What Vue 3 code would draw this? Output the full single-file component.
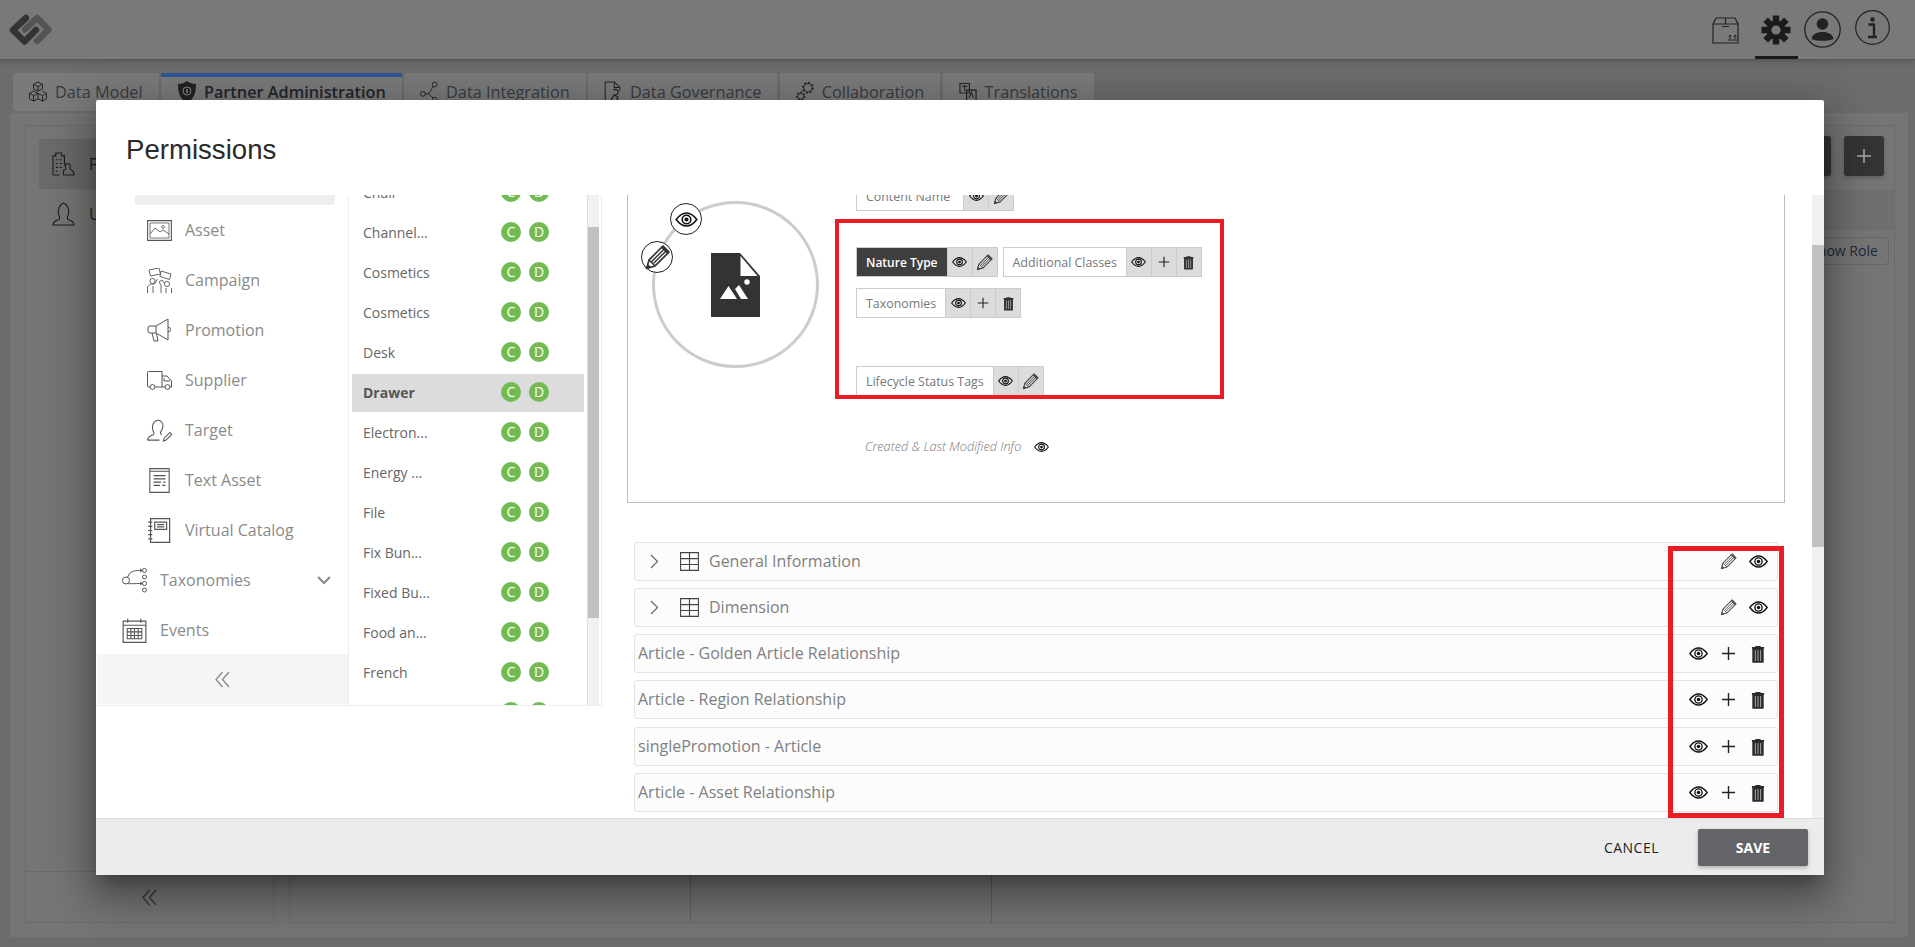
<script setup>
const tabs = [
  { label: 'Data Model', icon: 'i-cubes' },
  { label: 'Partner Administration', icon: 'i-shield', active: true },
  { label: 'Data Integration', icon: 'i-nodes' },
  { label: 'Data Governance', icon: 'i-govern' },
  { label: 'Collaboration', icon: 'i-collab' },
  { label: 'Translations', icon: 'i-translate' }
]
const navItems = [
  { label: 'Asset', icon: 'i-asset', sub: true },
  { label: 'Campaign', icon: 'i-campaign', sub: true },
  { label: 'Promotion', icon: 'i-promo', sub: true },
  { label: 'Supplier', icon: 'i-truck', sub: true },
  { label: 'Target', icon: 'i-target', sub: true },
  { label: 'Text Asset', icon: 'i-text', sub: true },
  { label: 'Virtual Catalog', icon: 'i-catalog', sub: true },
  { label: 'Taxonomies', icon: 'i-tax', chevron: true },
  { label: 'Events', icon: 'i-cal' }
]
const listItems = ['Chair', 'Channel...', 'Cosmetics', 'Cosmetics', 'Desk', 'Drawer', 'Electron...', 'Energy ...', 'File', 'Fix Bun...', 'Fixed Bu...', 'Food an...', 'French', 'Furniture']
const accordions = [
  { label: 'General Information', group: true },
  { label: 'Dimension', group: true },
  { label: 'Article - Golden Article Relationship' },
  { label: 'Article - Region Relationship' },
  { label: 'singlePromotion - Article', late: true },
  { label: 'Article - Asset Relationship' }
]
</script>

<template>
  <div class="page">
    <svg class="defs" aria-hidden="true">
      <symbol id="i-eye" viewBox="0 0 24 16">
        <path d="M1 8C5 2.700 8.500 1 12 1s7 1.700 11 7c-4 5.300-7.500 7-11 7S5 13.300 1 8Z" fill="none" stroke="currentColor" stroke-width="1.700" />
        <circle cx="12" cy="8" r="4.600" fill="none" stroke="currentColor" stroke-width="1.700" />
        <circle cx="12" cy="8" r="2.200" fill="currentColor" />
      </symbol>
      <symbol id="i-pencil" viewBox="0 0 24 24">
        <path d="M3 21l2-7L16.500 2.500l5 5L10 19Z" fill="none" stroke="currentColor" stroke-width="1.400" stroke-linejoin="round" />
        <path d="M7.200 15.300 18 4.500M8.800 16.800 19.700 6M5 14l5 5" fill="none" stroke="currentColor" stroke-width="1.200" />
        <path d="M2.500 21.500 3.700 17l3.300 3.300Z" fill="currentColor" />
        <path d="M15 4l5 5 1.800-1.800-5-5Z" fill="currentColor" />
      </symbol>
      <symbol id="i-plus" viewBox="0 0 16 16">
        <path d="M8 1v14M1 8h14" fill="none" stroke="currentColor" stroke-width="1.500" />
      </symbol>
      <symbol id="i-trash" viewBox="0 0 16 20">
        <path d="M5 2V.8h6V2h4v2H1V2Z" fill="currentColor" />
        <path d="M1.500 3h13v16a1 1 0 0 1-1 1h-11a1 1 0 0 1-1-1Z" fill="currentColor" />
        <path d="M5 5.500V18M8 5.500V18M11 5.500V18" fill="none" stroke="#b9b9b9" stroke-width="1" />
      </symbol>
      <symbol id="i-grid" viewBox="0 0 19 19">
        <path d="M.6.6h17.800v17.800H.6ZM.6 6.600h17.800M.6 12.500h17.800M9.500.6v17.800" fill="none" stroke="currentColor" stroke-width="1.100" />
      </symbol>
      <symbol id="i-asset" viewBox="0 0 25 21">
        <path d="M.6.6h23.800v19.800H.6Z" fill="none" stroke="currentColor" stroke-width="1.100" />
        <path d="M3 3h19v15H3Z" fill="none" stroke="currentColor" stroke-width=".8" />
        <path d="M3 14l5-6 5 4 3-2 6 4" fill="none" stroke="currentColor" stroke-width=".9" />
        <circle cx="16" cy="7" r="1.400" fill="none" stroke="currentColor" stroke-width=".8" />
      </symbol>
      <symbol id="i-campaign" viewBox="0 0 25 25">
        <path d="M2 2l10-2 1.500 6-10 2ZM14 3l10 3-1.500 5.500-9.500-3Z" fill="none" stroke="currentColor" stroke-width=".9" />
        <circle cx="5.500" cy="13" r="2.600" fill="none" stroke="currentColor" stroke-width=".9" />
        <circle cx="20" cy="16" r="2.600" fill="none" stroke="currentColor" stroke-width=".9" />
        <path d="M.5 25v-6l3-3h4l3-5M6 25v-7M14 25v-8l-2-3 3-2 2 3M24.500 25v-5M19 25v-5" fill="none" stroke="currentColor" stroke-width=".9" />
      </symbol>
      <symbol id="i-promo" viewBox="0 0 25 25">
        <path d="M21 1 9 8H3a2 2 0 0 0-2 2v3a2 2 0 0 0 2 2h6l12 7ZM21 9a2.500 2.500 0 0 1 0 5M9 8v7M5 15l2 8h4l-1.500-7.500" fill="none" stroke="currentColor" stroke-width="1" stroke-linejoin="round" />
      </symbol>
      <symbol id="i-truck" viewBox="0 0 25 19">
        <path d="M3 16H1.500a1 1 0 0 1-1-1V1.500a1 1 0 0 1 1-1H15v15.500H8M15 5h5l4.500 5v6h-2M15 16h3M17 7v3h6" fill="none" stroke="currentColor" stroke-width="1" />
        <circle cx="5.500" cy="16" r="2.400" fill="none" stroke="currentColor" stroke-width="1" />
        <circle cx="20.500" cy="16" r="2.400" fill="none" stroke="currentColor" stroke-width="1" />
      </symbol>
      <symbol id="i-target" viewBox="0 0 26 23">
        <path d="M.5 21.500c0-3 2-4 6-5.500 1-1 1-2 .2-3.500C5 10 5 3 10 1c5-1 7 3 6.500 7-.3 2.500-2 4-2.500 5.500 0 1 .3 2 1.500 2.500M.5 21.500H13" fill="none" stroke="currentColor" stroke-width="1.100" />
        <path d="M17 22.500l.8-3 6-6 2 2-6 6Z" fill="none" stroke="currentColor" stroke-width="1.100" />
      </symbol>
      <symbol id="i-text" viewBox="0 0 19 23">
        <path d="M.6.6h17.800v21.800H.6ZM.6 3h17.800" fill="none" stroke="currentColor" stroke-width="1" />
        <path d="M4 7h11M4 10h11M4 13h7M13 13h2M4 16h6M12 16h3" fill="none" stroke="currentColor" stroke-width="1" />
      </symbol>
      <symbol id="i-catalog" viewBox="0 0 19 21">
        <path d="M2 .6h16v19.800H2Z" fill="none" stroke="currentColor" stroke-width="1" />
        <path d="M5.500 3.500h10v6h-10ZM7.500 5.500h6M7.500 7.500h6M0 3.500h3.500M0 7h3.500M0 10.500h3.500M0 14h3.500M0 17.500h3.500" fill="none" stroke="currentColor" stroke-width="1" />
      </symbol>
      <symbol id="i-tax" viewBox="0 0 25 25">
        <circle cx="4" cy="12.500" r="3.500" fill="none" stroke="currentColor" stroke-width="1" />
        <circle cx="22.500" cy="2.500" r="2" fill="none" stroke="currentColor" stroke-width="1" />
        <circle cx="22.500" cy="9" r="2" fill="none" stroke="currentColor" stroke-width="1" />
        <circle cx="22.500" cy="15.500" r="2" fill="none" stroke="currentColor" stroke-width="1" />
        <circle cx="22.500" cy="22" r="2" fill="none" stroke="currentColor" stroke-width="1" />
        <path d="M5.500 9.500C8 2 14 2.500 20 2.500M5.500 15.500C8 16 12 15.500 20 15.500M18 .8l2.200 1.700L18 4.200M18 13.800l2.200 1.700-2.200 1.700" fill="none" stroke="currentColor" stroke-width="1" />
      </symbol>
      <symbol id="i-cal" viewBox="0 0 23 24">
        <path d="M.6 3h21.800v20.400H.6ZM.6 7h21.800M5 .6v4M17.500.6v4" fill="none" stroke="currentColor" stroke-width="1.100" />
        <path d="M4.500 10h14v10h-14ZM4.500 13.300h14M4.500 16.700h14M8 10v10M11.500 10v10M15 10v10" fill="none" stroke="currentColor" stroke-width="1" />
      </symbol>
      <symbol id="i-cubes" viewBox="0 0 20 24">
        <path d="M10 1l5 2.500v5L10 11 5 8.500v-5ZM5 3.500l5 2.500 5-2.500M10 6v5M5 11l5 2.500v6L5 22l-4.500-2.500v-6ZM.5 13.500 5 16l5-2.500M5 16v6M15 11l4.500 2.500v6L15 22l-5-2.500M10 13.500l5 2.500 4.500-2.500M15 16v6" fill="none" stroke="currentColor" stroke-width="1.100" />
      </symbol>
      <symbol id="i-shield" viewBox="0 0 18 22">
        <path d="M9 0c2.500 2 5.500 3 9 3 0 9-2 15-9 19C2 18 0 12 0 3c3.500 0 6.500-1 9-3Z" fill="currentColor" />
        <circle cx="9" cy="10" r="4" fill="none" stroke="#8a8a8a" stroke-width="1" />
        <path d="M9 8v4" stroke="#8a8a8a" stroke-width="1.500" />
      </symbol>
      <symbol id="i-nodes" viewBox="0 0 19 22">
        <circle cx="3" cy="13" r="2.500" fill="none" stroke="currentColor" stroke-width="1" />
        <circle cx="15.500" cy="3" r="2.500" fill="none" stroke="currentColor" stroke-width="1" />
        <circle cx="15.500" cy="19" r="2.500" fill="none" stroke="currentColor" stroke-width="1" />
        <path d="M5.500 13H9l5-8M9 13l5 4.500" fill="none" stroke="currentColor" stroke-width="1" />
      </symbol>
      <symbol id="i-govern" viewBox="0 0 19 24">
        <path d="M11 23H1V1h10l6 6v4M11 1v6h6" fill="none" stroke="currentColor" stroke-width="1.100" />
        <path d="M6 23l5-8 4 3-3 5ZM10 10a3 3 0 1 1 3 5" fill="none" stroke="currentColor" stroke-width="1.400" />
      </symbol>
      <symbol id="i-collab" viewBox="0 0 19 21">
        <circle cx="12.500" cy="6" r="4.400" fill="none" stroke="currentColor" stroke-width="1" />
        <circle cx="12.500" cy="6" r="5.400" fill="none" stroke="currentColor" stroke-width="1.800" stroke-dasharray="1.800 2.400" />
        <circle cx="5" cy="15" r="3.200" fill="none" stroke="currentColor" stroke-width="1" />
        <circle cx="5" cy="15" r="4.200" fill="none" stroke="currentColor" stroke-width="1.600" stroke-dasharray="1.600 2.200" />
      </symbol>
      <symbol id="i-translate" viewBox="0 0 19 20">
        <path d="M1 1h10v10H1ZM8 8h10v11H8Z" fill="none" stroke="currentColor" stroke-width="1.200" />
        <path d="M3 4h6M6 3v6M10.500 16.500l2.500-6 2.500 6" fill="none" stroke="currentColor" stroke-width="1.100" />
      </symbol>
      <symbol id="i-building" viewBox="0 0 24 25">
        <path d="M1 24V4h3V1h6v3h3v10M1 24h7M4 8h2M8 8h2M4 12h2M8 12h2M4 16h2M8 16h2M4 20h2" fill="none" stroke="currentColor" stroke-width="1.100" />
        <path d="M12 24v-4c0-1 1-1.500 2-2 .5-1 .3-2 0-3 0-4 5-4 5 0 0 1-.5 2 0 3 2 1 4 2 4 6Z" fill="none" stroke="currentColor" stroke-width="1.100" />
      </symbol>
      <symbol id="i-person" viewBox="0 0 23 24">
        <path d="M1 23c0-3 2-4 6-5.500 1-1 1-2 .2-3.500C5.500 11 5.500 4 11.500 1c6 3 6 10 4.300 13-.8 1.500-.8 2.500.2 3.500 4 1.500 6 2.500 6 5.500Z" fill="none" stroke="currentColor" stroke-width="1.100" />
      </symbol>
    </svg>

    <header class="topbar">
      <svg class="logo" viewBox="0 0 45 31">
        <path d="M29 27 40.500 15.500 29 4 17 15.500" fill="none" stroke="#545454" stroke-width="6.500" stroke-linejoin="round" stroke-linecap="round" />
        <path d="M18 4 5 16l11.500 11.500L28 16" fill="none" stroke="#333" stroke-width="6.500" stroke-linejoin="round" stroke-linecap="round" />
      </svg>
      <div class="top-icons">
        <svg class="t-box" viewBox="0 0 27 27">
          <path d="M1 7 4 1h19l3 6v19H1ZM1 7h25M13.500 1v6M10 9.500h7" fill="none" stroke="#222" stroke-width="1.200" />
          <path d="M16 23h9M18 22v-4M23 22v-4M16.800 19.500 18 18l1.200 1.500M21.800 19.500 23 18l1.200 1.500" fill="none" stroke="#222" stroke-width="1" />
        </svg>
        <div class="gear-cell">
          <svg class="t-gear" viewBox="0 0 32 32">
            <path d="M16 1.500v29M1.500 16h29M5.700 5.700l20.600 20.600M26.300 5.700 5.700 26.300" stroke="#1b1b1b" stroke-width="6.500" />
            <circle cx="16" cy="16" r="9.500" fill="#1b1b1b" />
            <circle cx="16" cy="16" r="4.600" fill="#787878" />
          </svg>
        </div>
        <svg class="t-user" viewBox="0 0 37 37">
          <circle cx="18.500" cy="18.500" r="17.700" fill="none" stroke="#222" stroke-width="1.300" />
          <circle cx="18.500" cy="13" r="5.800" fill="#222" />
          <path d="M7.500 28c1-5 5-7 11-7s10 2 11 7c-2 1-6 1.800-11 1.800S9.500 29 7.500 28Z" fill="#222" />
        </svg>
        <svg class="t-info" viewBox="0 0 35 35">
          <circle cx="17.500" cy="17.500" r="16.800" fill="none" stroke="#222" stroke-width="1.200" />
          <circle cx="17.500" cy="9.500" r="2.300" fill="#222" />
          <path d="M13.500 14.500h5.500v12M13 27h9" fill="none" stroke="#222" stroke-width="2.400" />
        </svg>
      </div>
    </header>

    <nav class="tabs">
      <div v-for="t in tabs" :key="t.label" class="tab" :class="{ active: t.active }">
        <svg class="tab-icon"><use :href="'#' + t.icon" /></svg>
        <span>{{ t.label }}</span>
      </div>
    </nav>

    <main class="panel">
      <aside class="bg-side">
        <div class="bg-side-item current">
          <svg class="bg-side-icon"><use href="#i-building" /></svg><span>Partners</span>
        </div>
        <div class="bg-side-item">
          <svg class="bg-side-icon"><use href="#i-person" /></svg><span>Users</span>
        </div>
        <div class="bg-collapse">
          <svg viewBox="0 0 15 17" class="dbl"><path d="M7.500 1 1 8.500 7.500 16M14 1 7.500 8.500 14 16" fill="none" stroke="#333" stroke-width="1.200" /></svg>
        </div>
      </aside>
      <section class="bg-main">
        <div class="bg-toolbar">
          <div class="bg-btn"></div>
          <div class="bg-btn"><svg class="bg-plus"><use href="#i-plus" /></svg></div>
        </div>
        <div class="bg-strip"></div>
        <div class="bg-action"><span class="bg-show">Show Role</span></div>
        <div class="bg-cols">
          <div class="bg-col c1"></div>
          <div class="bg-col c2"></div>
          <div class="bg-col c3"></div>
        </div>
      </section>
    </main>

    <div class="modal">
      <div class="modal-title"><h1>Permissions</h1></div>
      <div class="modal-body">
        <div class="left">
          <div class="nav">
            <div class="nav-selected"></div>
            <div v-for="n in navItems" :key="n.label" class="nav-item" :class="{ sub: n.sub }">
              <svg class="nav-icon"><use :href="'#' + n.icon" /></svg>
              <span>{{ n.label }}</span>
              <svg v-if="n.chevron" class="nav-chev" viewBox="0 0 14 9">
                <path d="M1 1l6 6 6-6" fill="none" stroke="#8a8a8a" stroke-width="2.200" />
              </svg>
            </div>
            <div class="nav-collapse">
              <svg viewBox="0 0 15 17" class="dbl"><path d="M7.500 1 1 8.500 7.500 16M14 1 7.500 8.500 14 16" fill="none" stroke="#888" stroke-width="1.300" /></svg>
            </div>
          </div>
          <div class="list">
            <div v-for="(item, i) in listItems" :key="i" class="list-row" :class="{ selected: item === 'Drawer' }">
              <span class="list-name">{{ item }}</span>
              <span class="badge">C</span>
              <span class="badge">D</span>
            </div>
          </div>
          <div class="track list-track"><div class="thumb"></div></div>
        </div>

        <div class="content">
          <div class="frame">
            <div class="circle">
              <span class="bubble b-eye"><svg class="ic-eye"><use href="#i-eye" /></svg></span>
              <span class="bubble b-pencil"><svg class="ic-pencil big"><use href="#i-pencil" /></svg></span>
              <svg class="doc" viewBox="0 0 49 64">
                <path d="M0 0h29l20 23v41H0Z" fill="#333" />
                <path d="M29.500 3v20h17Z" fill="#fff" />
                <path d="M9 46l8.500-13L26 46ZM24 36l4-4 9 14h-7Z" fill="#fff" />
                <circle cx="36" cy="29" r="2.700" fill="#fff" />
              </svg>
            </div>
            <div class="fields">
              <div class="chip chip-wide mb36">
                <span class="chip-label">Content Name</span>
                <span class="cell"><svg class="ic-eye"><use href="#i-eye" /></svg></span>
                <span class="cell"><svg class="ic-pencil"><use href="#i-pencil" /></svg></span>
              </div>
              <div class="chip-row mb11">
                <div class="chip">
                  <span class="chip-label dark">Nature Type</span>
                  <span class="cell"><svg class="ic-eye"><use href="#i-eye" /></svg></span>
                  <span class="cell"><svg class="ic-pencil"><use href="#i-pencil" /></svg></span>
                </div>
                <div class="chip">
                  <span class="chip-label">Additional Classes</span>
                  <span class="cell"><svg class="ic-eye"><use href="#i-eye" /></svg></span>
                  <span class="cell"><svg class="ic-plus"><use href="#i-plus" /></svg></span>
                  <span class="cell"><svg class="ic-trash"><use href="#i-trash" /></svg></span>
                </div>
              </div>
              <div class="chip mb48">
                <span class="chip-label">Taxonomies</span>
                <span class="cell"><svg class="ic-eye"><use href="#i-eye" /></svg></span>
                <span class="cell"><svg class="ic-plus"><use href="#i-plus" /></svg></span>
                <span class="cell"><svg class="ic-trash"><use href="#i-trash" /></svg></span>
              </div>
              <div class="chip">
                <span class="chip-label">Lifecycle Status Tags</span>
                <span class="cell"><svg class="ic-eye"><use href="#i-eye" /></svg></span>
                <span class="cell"><svg class="ic-pencil"><use href="#i-pencil" /></svg></span>
              </div>
              <div class="created">
                <em>Created &amp; Last Modified Info</em>
                <svg class="ic-eye"><use href="#i-eye" /></svg>
              </div>
            </div>
          </div>

          <div v-for="a in accordions" :key="a.label" class="acc" :class="{ late: a.late, group: a.group }">
            <template v-if="a.group">
              <svg class="acc-chev" viewBox="0 0 9 15"><path d="M1 1l6.500 6.500L1 14" fill="none" stroke="#666" stroke-width="1.200" /></svg>
              <svg class="acc-grid"><use href="#i-grid" /></svg>
            </template>
            <span class="acc-label">{{ a.label }}</span>
            <div class="acts">
              <template v-if="a.group">
                <span class="act"><svg class="act-pencil"><use href="#i-pencil" /></svg></span>
                <span class="act"><svg class="act-eye"><use href="#i-eye" /></svg></span>
              </template>
              <template v-else>
                <span class="act"><svg class="act-eye"><use href="#i-eye" /></svg></span>
                <span class="act"><svg class="act-plus"><use href="#i-plus" /></svg></span>
                <span class="act"><svg class="act-trash"><use href="#i-trash" /></svg></span>
              </template>
            </div>
          </div>
        </div>

        <div class="track modal-track"><div class="thumb"></div></div>
      </div>
      <footer class="modal-foot">
        <button class="cancel" type="button">CANCEL</button>
        <button class="save" type="button">SAVE</button>
      </footer>
      <div class="red red-a"></div>
      <div class="red red-b"></div>
    </div>
  </div>
</template>

<style>
html, body { margin: 0; padding: 0; overflow: hidden; }
</style>

<style scoped>
.page {
  position: relative;
  width: 1915px;
  height: 947px;
  overflow: hidden;
  background: #6c6c6c;
  font-family: "Open Sans", "Liberation Sans", sans-serif;
  display: flex;
  flex-direction: column;
}
.defs { position: absolute; width: 0; height: 0; }

.topbar {
  height: 60px;
  box-sizing: border-box;
  flex: none;
  background: #797979;
  border-bottom: 1px solid #585858;
  box-shadow: 0 2px 6px rgba(0, 0, 0, .18);
  display: flex;
  align-items: center;
  padding-left: 8px;
  position: relative;
}
.logo { width: 45px; height: 31px; margin-top: -1px; }
.top-icons { margin-left: auto; height: 59px; display: flex; align-items: flex-start; }
.t-box { width: 27px; height: 27px; margin-top: 17px; margin-right: 16px; }
.gear-cell { width: 43px; height: 59px; box-sizing: border-box; border-bottom: 3px solid #1b1b1b; display: flex; justify-content: center; margin-right: 6px; }
.t-gear { width: 32px; height: 32px; margin-top: 14px; margin-left: -2px; }
.t-user { width: 37px; height: 37px; margin-top: 11px; margin-right: 14px; }
.t-info { width: 35px; height: 35px; margin-top: 10px; margin-right: 25px; }

.tabs { display: flex; gap: 2.3px; margin: 13px 0 0 13px; flex: none; }
.tab {
  height: 38px;
  box-sizing: border-box;
  padding: 0 16px;
  background: #7a7a7a;
  display: flex;
  align-items: center;
  gap: 8px;
  font-size: 16.3px;
  color: #363a44;
  white-space: nowrap;
}
.tab.active { box-shadow: inset 0 4px 0 #2e5599; font-weight: 600; color: #22252c; padding-left: 17px; }
.tab-icon { width: 18px; height: 22px; color: #222; }

.panel {
  flex: none;
  margin: 2px 7px 0 10px;
  height: 824px;
  box-sizing: border-box;
  padding: 12px 13px 14px 15px;
  background: #757575;
  display: flex;
  gap: 15px;
}
.bg-side {
  width: 249px;
  box-sizing: border-box;
  border: 1px solid #6b6b6b;
  padding: 13px 13px 0;
  display: flex;
  flex-direction: column;
  font-size: 16px;
  color: #222;
}
.bg-side-item { height: 50px; display: flex; align-items: center; gap: 14px; padding-left: 13px; border-radius: 3px; }
.bg-side-item.current { background: #6a6a6a; }
.bg-side-icon { width: 23px; height: 24px; color: #1c1c1c; }
.bg-collapse { margin: auto -13px 0; height: 50px; border-top: 1px solid #6b6b6b; display: flex; align-items: center; justify-content: center; }
.bg-main { flex: 1; border: 1px solid #6b6b6b; display: flex; flex-direction: column; }
.bg-toolbar { height: 64px; display: flex; justify-content: flex-end; align-items: flex-start; gap: 13px; padding: 10px 10px 0 0; box-sizing: border-box; }
.bg-btn { width: 40px; height: 40px; border-radius: 3px; background: #333436; display: flex; align-items: center; justify-content: center; box-shadow: 0 2px 4px rgba(0, 0, 0, .2); }
.bg-plus { width: 16px; height: 16px; color: #a8a8a8; }
.bg-strip { height: 40px; background: #6f6f6f; }
.bg-action { height: 42px; display: flex; justify-content: flex-end; align-items: center; padding-right: 5px; }
.bg-show { width: 90px; height: 28px; box-sizing: border-box; border: 1px solid #666; border-radius: 4px; font-size: 14px; line-height: 26px; text-align: center; color: #1f2a3a; }
.bg-cols { flex: 1; display: flex; }
.bg-col { border-right: 1px solid #5f5f5f; }
.c1 { width: 400px; }
.c2 { width: 300px; }
.c3 { flex: 1; border-right: 0; }

.modal {
  position: absolute;
  left: 96px;
  top: 100px;
  width: 1728px;
  height: 775px;
  background: #fff;
  display: flex;
  flex-direction: column;
  border-radius: 2px;
  box-shadow: 0 11px 15px -7px rgba(0, 0, 0, .3), 0 24px 38px 3px rgba(0, 0, 0, .22), 0 9px 46px 8px rgba(0, 0, 0, .2);
}
.modal-title { height: 95px; flex: none; box-sizing: border-box; padding: 5px 0 0 30px; display: flex; align-items: center; }
.modal-title h1 { margin: 0; font: 400 27.6px "Liberation Sans", Arial, sans-serif; color: #2a2a2a; }
.modal-body { flex: 1; display: flex; min-height: 0; overflow: hidden; }

.left { width: 506px; height: 511px; flex: none; box-sizing: border-box; display: flex; padding-left: 1px; border-bottom: 1px solid #eee; border-right: 1px solid #eee; }
.nav { width: 252px; flex: none; box-sizing: border-box; border-right: 1px solid #eee; overflow: hidden; }
.nav-selected { height: 10px; margin: 0 13px 0 38px; width: 200px; background: #eee; border-radius: 0 0 3px 3px; }
.nav-item { height: 50px; display: flex; align-items: center; gap: 13px; padding-left: 25px; padding-right: 17px; font-size: 16px; color: #8a8a8a; }
.nav-item.sub { padding-left: 50px; }
.nav-icon { width: 25px; height: 25px; color: #555; flex: none; }
.nav-chev { width: 14px; height: 9px; margin-left: auto; }
.nav-collapse { height: 50px; margin-top: -1px; background: #f5f5f5; display: flex; align-items: center; justify-content: center; }
.dbl { width: 15px; height: 17px; }

.list { width: 238px; flex: none; overflow: hidden; padding-left: 3px; box-sizing: border-box; }
.list-row { height: 38px; margin-bottom: 2px; width: 232px; box-sizing: border-box; padding: 0 0 2px 11px; display: flex; align-items: center; font-size: 14px; color: #666; }
.list-row:first-child { margin-top: -21px; }
.list-row.selected { background: #dcdcdc; font-weight: 700; color: #555; }
.list-name { width: 138px; flex: none; white-space: nowrap; }
.badge { width: 20px; height: 20px; border-radius: 50%; background: #72bb53; color: #fff; font-size: 14px; font-weight: 400; line-height: 20px; text-align: center; flex: none; margin-right: 8px; }

.track { flex: none; width: 12px; background: #f1f1f1; box-sizing: border-box; }
.thumb { background: #c1c1c1; }
.list-track { padding-top: 32px; border-left: 1px solid #ddd; }
.list-track .thumb { height: 391px; }
.modal-track { padding-top: 50px; }
.modal-track .thumb { height: 302px; }

.content { flex: 1; min-width: 0; overflow: hidden; padding-left: 25px; box-sizing: border-box; }
.frame {
  width: 1158px;
  height: 338px;
  margin-top: -30px;
  box-sizing: border-box;
  border: solid #bdbdbd;
  border-width: 0 1px 1px;
  padding: 16px 0 0 24px;
  display: flex;
  gap: 37px;
}
.circle {
  position: relative;
  width: 167px;
  height: 167px;
  margin-top: 20px;
  box-sizing: border-box;
  border: 3px solid #ccc;
  border-radius: 50%;
  display: flex;
  align-items: center;
  justify-content: center;
  flex: none;
}
.doc { width: 49px; height: 64px; }
.bubble { position: absolute; width: 32px; height: 32px; box-sizing: border-box; border: 1px solid #222; border-radius: 50%; background: #fff; display: flex; align-items: center; justify-content: center; color: #111; overflow: visible; }
.b-eye { left: 15px; top: -1px; }
.b-pencil { left: -14px; top: 37px; }
.fields { display: flex; flex-direction: column; align-items: flex-start; }
.chip { height: 30px; box-sizing: border-box; border: 1px solid #ccc; display: flex; font-size: 12.4px; color: #777; background: #fff; }
.chip-row { display: flex; gap: 5px; }
.mb36 { margin-bottom: 36px; }
.mb11 { margin-bottom: 11px; }
.mb48 { margin-bottom: 48px; }
.chip-label { padding: 1px 9px 0 9px; line-height: 28px; white-space: nowrap; }
.chip-wide .chip-label { padding-right: 13px; }
.chip-label.dark { background: #3f3f3f; color: #fff; font-weight: 600; font-size: 12px; }
.cell { width: 25px; background: #dcdcdc; border-left: 1px solid #ccc; box-sizing: border-box; display: flex; align-items: center; justify-content: center; color: #222; }
.ic-eye { width: 15px; height: 10px; color: #111; }
.ic-pencil { width: 19px; height: 19px; color: #444; }
.ic-pencil.big { width: 29px; height: 29px; flex: none; color: #333; }
.bubble .ic-eye { width: 23px; height: 15px; }
.ic-plus { width: 12px; height: 12px; color: #222; }
.ic-trash { width: 11px; height: 15px; color: #333; }
.created { margin: 40px 0 0 9px; display: flex; align-items: center; gap: 13px; font-size: 12.7px; font-weight: 300; color: #777; line-height: 20px; }
.created .ic-eye { margin-top: 1px; }

.acc {
  width: 1144px;
  height: 39px;
  margin: 7px 0 0 7px;
  box-sizing: border-box;
  border: 1px solid #e3e3e3;
  border-radius: 3px;
  background: #fcfcfc;
  display: flex;
  align-items: center;
  padding-left: 3px;
  padding-right: 4px;
  font-size: 16px;
  color: #808080;
}
.acc-label { padding-bottom: 2px; }
.frame + .acc { margin-top: 39px; }
.acc.late { margin-top: 8px; }
.acc.group { padding-left: 15px; }
.acc-chev { width: 9px; height: 15px; margin-right: 21px; }
.acc-grid { width: 19px; height: 19px; margin-right: 10px; color: #444; }
.acts { margin-left: auto; display: flex; }
.act { width: 30px; height: 37px; display: flex; align-items: center; justify-content: center; }
.act-eye { width: 19px; height: 13px; color: #111; }
.act-pencil { width: 19px; height: 19px; color: #555; }
.act-plus { width: 15px; height: 15px; color: #222; }
.act-trash { width: 14px; height: 18px; color: #2a2a2a; }

.modal-foot { height: 57px; flex: none; box-sizing: border-box; background: #ececec; border-top: 1px solid #ddd; display: flex; align-items: center; justify-content: flex-end; padding-right: 16px; gap: 39px; }
.cancel { border: 0; background: none; padding: 0; font: 400 14px "Open Sans", sans-serif; letter-spacing: .5px; color: #222; }
.save { width: 110px; height: 37px; border: 0; border-radius: 2px; background: #636468; color: #fff; font: 700 14px "Open Sans", sans-serif; box-shadow: 0 2px 4px rgba(0, 0, 0, .25); }

.red { position: absolute; box-sizing: border-box; border: 4px solid #ed1c24; pointer-events: none; }
.red-a { left: 739px; top: 119px; width: 389px; height: 180px; }
.red-b { left: 1572px; top: 446px; width: 116px; height: 272px; border-width: 5px; }
</style>
